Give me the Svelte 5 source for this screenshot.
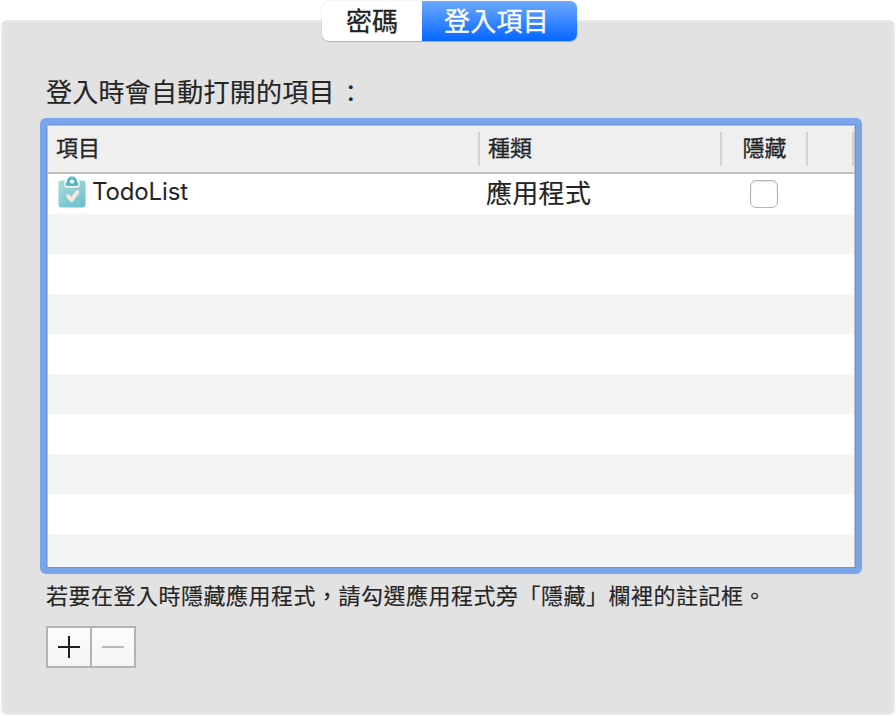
<script>
  const tabs = ['密碼', '登入項目'];
  let active = $state(1);
  let hidden = $state(false);
  const emptyRows = Array.from({ length: 9 });
</script>

<main>
  <nav>
    {#each tabs as tab, i}
      <button class="tab" class:active={active === i} onclick={() => (active = i)}>{tab}</button>
    {/each}
  </nav>
  <section>
    <h1>登入時會自動打開的項目<span class="colon">：</span></h1>
    <div class="ring">
      <div class="table">
        <div class="head">
          <div class="c1">項目</div>
          <div class="c2">種類</div>
          <div class="c3">隱藏</div>
          <div class="c4"></div>
        </div>
        <div class="row item">
          <div class="name">
            <svg width="28" height="32" viewBox="0 0 28 32">
              <defs>
                <linearGradient id="board" x1="0" y1="0" x2="0.6" y2="1">
                  <stop offset="0" stop-color="#a9dde0" />
                  <stop offset="1" stop-color="#71c3cb" />
                </linearGradient>
              </defs>
              <rect x="0.5" y="4.5" width="27" height="27" rx="3" fill="url(#board)" />
              <path d="M6.500 4V9.500Q6.500 11.500 8.500 11.500H19.500Q21.500 11.500 21.500 9.500V4Z" fill="#fff" />
              <path d="M7.800 9.200V7.800Q7.800 6 9 5.800C9 2.400 11 .5 14 .5S19 2.400 19 5.800Q20.200 6 20.200 7.800V9.200Q20.200 10 19.400 10H8.600Q7.800 10 7.800 9.200Z" fill="#55bac5" />
              <circle cx="14" cy="5.600" r="2.100" fill="#fff" />
              <path d="M10.200 20.200L13.500 24L19.500 16" fill="none" stroke="#f7e7e0" stroke-width="4" stroke-linecap="round" stroke-linejoin="round" />
            </svg>
            <span>TodoList</span>
          </div>
          <div class="kind">應用程式</div>
          <div class="hide"><input type="checkbox" bind:checked={hidden} aria-label="隱藏" /></div>
        </div>
        {#each emptyRows as _}
          <div class="row"></div>
        {/each}
      </div>
    </div>
    <p>若要在登入時隱藏應用程式，請勾選應用程式旁「隱藏」欄裡的註記框。</p>
    <div class="buttons">
      <button aria-label="+"><svg width="22" height="22" viewBox="0 0 22 22"><path d="M0 11H22M11 0V22" stroke="#1e1e1e" stroke-width="2" /></svg></button>
      <button aria-label="−" disabled><svg width="22" height="22" viewBox="0 0 22 22"><path d="M0 11H22" stroke="#b9b9b9" stroke-width="2" /></svg></button>
    </div>
  </section>
</main>

<style>
  :global(body) {
    background: #fff;
  }
  main {
    box-sizing: border-box;
    width: 896px;
    height: 716px;
    padding: 1px 1px 1px;
    font-family: Inter, 'Noto Sans CJK TC', sans-serif;
    color: #242424;
    display: flex;
    flex-direction: column;
    overflow: hidden;
  }
  button {
    font: inherit;
    border: 0;
    padding: 0;
    margin: 0;
  }
  nav {
    display: flex;
    align-self: flex-start;
    margin-left: 321px;
    height: 40px;
    border-radius: 7px;
    position: relative;
    z-index: 1;
    box-shadow: 0 0 1px #0005, 0 1px 1px #0003;
  }
  .tab {
    box-sizing: border-box;
    width: 100px;
    height: 40px;
    line-height: 38px;
    padding-top: 1px;
    font-size: 26px;
    background: #fff;
    color: #222;
    border-radius: 7px 0 0 7px;
    -webkit-text-stroke: 0.3px currentColor;
  }
  .tab + .tab {
    width: 155px;
    border-radius: 0 7px 7px 0;
    padding-right: 6px;
    letter-spacing: 0.3px;
  }
  .tab.active {
    background: linear-gradient(#6ca9fc, #0566ff);
    color: #fff;
  }
  section {
    box-sizing: border-box;
    flex: none;
    width: 894px;
    height: 695px;
    margin-top: -21px;
    padding: 51px 32px 0 37px;
    background: #e2e2e2;
    border: 2px solid #e9e9e9;
    border-radius: 6px;
  }
  h1 {
    margin: 0 0 5px 6px;
    font-size: 26px;
    font-weight: 400;
    line-height: 40px;
    height: 40px;
    letter-spacing: 0.25px;
    white-space: nowrap;
  }
  .colon {
    margin-left: 4px;
    font-size: 24px;
  }
  .ring {
    box-sizing: border-box;
    width: 822px;
    height: 456px;
    padding: 6px;
    background: #7ba5eb;
    border-radius: 6px;
  }
  .table {
    box-sizing: border-box;
    height: 444px;
    overflow: hidden;
    border: 1px solid #6c96df;
    background: #fff;
    box-shadow: inset 0 0 0 1px #c0c0c0;
    padding: 1px;
  }
  .head {
    display: flex;
    height: 46px;
    background: #efefef;
    border-bottom: 2px solid #c2c2c2;
    font-size: 22px;
    -webkit-text-stroke: 0.3px currentColor;
  }
  .head div {
    box-sizing: border-box;
    height: 34px;
    margin-top: 6px;
    line-height: 33px;
    border-right: 2px solid #d2d2d2;
  }
  .c1 {
    width: 432px;
    padding-left: 8px;
  }
  .c2 {
    width: 242px;
    padding-left: 8px;
  }
  .c3 {
    width: 86px;
    padding-left: 1px;
    text-align: center;
  }
  .c4 {
    width: 46px;
  }
  .row {
    display: flex;
    height: 40px;
    background: #fff;
  }
  .row:nth-child(odd) {
    background: #f4f5f5;
  }
  .name {
    width: 438px;
    display: flex;
  }
  .name svg {
    flex: none;
    margin: 2px 6px 0 10px;
  }
  .name span {
    font-size: 24px;
    line-height: 36px;
    letter-spacing: -0.12px;
  }
  .kind {
    width: 234px;
    font-size: 26px;
    letter-spacing: 0.3px;
    line-height: 39px;
  }
  .hide {
    width: 88px;
    display: flex;
    justify-content: center;
  }
  input {
    appearance: none;
    box-sizing: border-box;
    width: 28px;
    height: 28px;
    margin: 6px 0 0;
    border: 1.5px solid #b5b5b5;
    border-radius: 6px;
    background: #fff;
    box-shadow: inset 0 1px 2px #0002;
  }
  p {
    margin: 6px 0 13px 6px;
    font-size: 22px;
    line-height: 33px;
    letter-spacing: 0.5px;
    white-space: nowrap;
  }
  h1,
  .kind,
  p {
    -webkit-text-stroke: 0.15px currentColor;
  }
  .buttons {
    display: flex;
    margin-left: 6px;
  }
  .buttons button {
    box-sizing: border-box;
    width: 46px;
    height: 42px;
    border: 2px solid #b3b3b3;
    background: linear-gradient(#fcfcfc, #f4f5f5);
    display: flex;
    align-items: center;
    justify-content: center;
  }
  .buttons button + button {
    margin-left: -2px;
  }
</style>
